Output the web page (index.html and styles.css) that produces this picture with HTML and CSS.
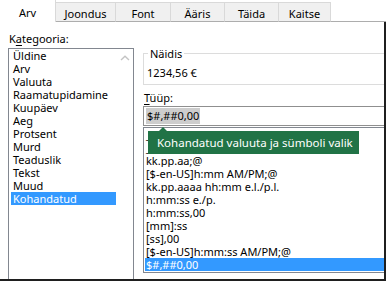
FILE: index.html
```html
<!DOCTYPE html>
<html lang="et">

<head>
    <meta charset="UTF-8">
    <meta name="viewport" content="width=device-width, initial-scale=1.0">
    <title>Lahtrite vormindamine</title>
    <link rel="stylesheet" href="styles.css">
</head>

<body>
    <div class="tabs">
        <div class="tab tab-arv active">Arv</div>
        <div class="tab tab-joondus">Joondus</div>
        <div class="tab tab-font">Font</div>
        <div class="tab tab-aaris">Ääris</div>
        <div class="tab tab-taida">Täida</div>
        <div class="tab tab-kaitse">Kaitse</div>
        <div class="tab-rest"></div>
    </div>

    <div class="page">
        <div class="category">
            <div class="field-label">K<u>a</u>tegooria:</div>
            <div class="category-box">
                <ul class="category-list">
                    <li>Üldine</li>
                    <li>Arv</li>
                    <li>Valuuta</li>
                    <li>Raamatupidamine</li>
                    <li>Kuupäev</li>
                    <li>Aeg</li>
                    <li>Protsent</li>
                    <li>Murd</li>
                    <li>Teaduslik</li>
                    <li>Tekst</li>
                    <li>Muud</li>
                    <li class="selected">Kohandatud</li>
                </ul>
                <div class="scrollbar">
                    <svg width="10" height="6" viewBox="0 0 10 6">
                        <polyline points="1,5 5,1.2 9,5" fill="none" stroke="#c4c4c4" stroke-width="1.4" />
                    </svg>
                </div>
            </div>
        </div>

        <div class="format">
            <fieldset class="sample">
                <legend>Näidis</legend>
                <div class="sample-value">1234,56 €</div>
            </fieldset>

            <div class="field-label"><u>T</u>üüp:</div>
            <div class="type-input"><span class="type-selection">$#,##0,00</span></div>

            <div class="type-box">
                <ul class="type-list">
                    <li>_-* #,##0 €_-;-* #,##0 €_-</li>
                    <li>_-* #,##0,00 €_-;-* #,##0,00 €_-</li>
                    <li>kk.pp.aa;@</li>
                    <li>[$-en-US]h:mm AM/PM;@</li>
                    <li>kk.pp.aaaa hh:mm e.l./p.l.</li>
                    <li>h:mm:ss e./p.</li>
                    <li>h:mm:ss,00</li>
                    <li>[mm]:ss</li>
                    <li>[ss],00</li>
                    <li>[$-en-US]h:mm:ss AM/PM;@</li>
                    <li class="selected">$#,##0,00</li>
                </ul>
                <div class="tooltip">Kohandatud valuuta ja sümboli valik</div>
            </div>
        </div>
    </div>
</body>

</html>
```

FILE: styles.css
```css
* {
    box-sizing: border-box;
    margin: 0;
    padding: 0;
}

body {
    width: 386px;
    height: 281px;
    overflow: hidden;
    background: #fff;
    color: #000;
    font-family: "Noto Sans", sans-serif;
    font-size: 11px;
    line-height: 13px;
}

u {
    text-decoration-thickness: 1px;
    text-underline-offset: 2px;
}

/* tab strip */
.tabs {
    display: flex;
    height: 22px;
}

.tab {
    height: 20px;
    margin-top: 2px;
    padding-top: 4px;
    background: #f0f0f0;
    border-top: 1px solid #d9d9d9;
    border-right: 1px solid #d9d9d9;
    border-bottom: 1px solid #adadad;
    text-align: center;
    white-space: nowrap;
}

.tab.active {
    height: 22px;
    margin-top: 0;
    padding-top: 6px;
    background: #fff;
    border-top: none;
    border-bottom: none;
}

.tab-arv { width: 56px; }
.tab-joondus { width: 60px; }
.tab-font { width: 55px; }
.tab-aaris { width: 54px; }
.tab-taida { width: 54px; }
.tab-kaitse { width: 52px; }

.tab-rest {
    flex: 1;
    border-bottom: 1px solid #adadad;
}

/* page */
.page {
    display: flex;
    height: 259px;
    border-right: 2px solid #1f1f1f;
    border-bottom: 2px solid #1f1f1f;
}

.field-label {
    padding-left: 1px;
    white-space: nowrap;
}

.category {
    width: 134px;
    padding: 10px 0 0 8px;
    display: flex;
    flex-direction: column;
}

.category-box {
    flex: 1;
    margin-top: 3px;
    display: flex;
    border: 1px solid #828790;
    border-bottom: none;
}

.category-list {
    list-style: none;
    width: 107px;
    padding-left: 2px;
}

.category-list li {
    height: 13px;
    padding-left: 2px;
    white-space: nowrap;
}

.selected {
    background: #3399ff;
    color: #fff;
}

.scrollbar {
    flex: 1;
    display: flex;
    justify-content: center;
    padding-top: 6px;
}

.scrollbar svg {
    display: block;
}

/* right column */
.format {
    flex: 1;
    min-width: 0;
    margin-left: 9px;
    padding-top: 25px;
    display: flex;
    flex-direction: column;
}

.sample {
    border: 1px solid #dcdcdc;
    border-right: none;
    padding: 6px 0 5px 3px;
}

.sample legend {
    margin-left: 1px;
    padding: 0 2px;
}

.format .field-label {
    margin-top: 6px;
}

.type-input {
    height: 20px;
    margin-top: 2px;
    padding: 1px 0 0 2px;
    border: 1px solid #8f8f8f;
    border-right: none;
}

.type-selection {
    display: inline-block;
    height: 16px;
    line-height: 15px;
    padding: 0 1px;
    background: #cdcdcd;
}

.type-box {
    position: relative;
    height: 146px;
    margin-top: 1px;
    border: 1px solid #828790;
    border-right: none;
}

.type-list {
    list-style: none;
    padding-left: 1px;
}

.type-list li {
    height: 13px;
    padding-left: 1px;
    white-space: nowrap;
    overflow: hidden;
}

.tooltip {
    position: absolute;
    left: 4px;
    top: 3px;
    width: 211px;
    height: 23px;
    padding-left: 9px;
    background: #217346;
    color: #fff;
    font-size: 11.5px;
    line-height: 23px;
    white-space: nowrap;
}

.tooltip::before {
    content: "";
    position: absolute;
    left: 11px;
    top: -4px;
    border-left: 4px solid transparent;
    border-right: 4px solid transparent;
    border-bottom: 4px solid #217346;
}
```
